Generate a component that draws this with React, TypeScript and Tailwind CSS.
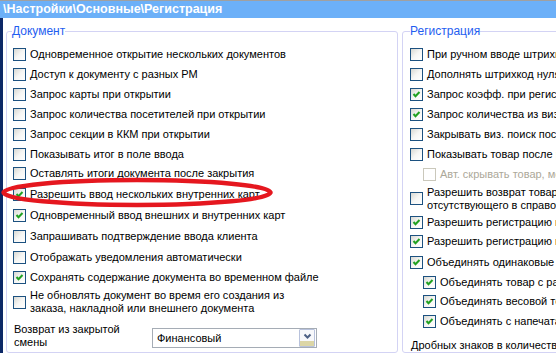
import React from 'react';
import clsx from 'clsx';

type Item = {
  text: string[];
  h: string;
  checked?: boolean;
  disabled?: boolean;
  indent?: boolean;
};

const docItems: Item[] = [
  { text: ['Одновременное открытие нескольких документов'], h: 'h-[20px]' },
  { text: ['Доступ к документу с разных РМ'], h: 'h-[20px]' },
  { text: ['Запрос карты при открытии'], h: 'h-[20px]' },
  { text: ['Запрос количества посетителей при открытии'], h: 'h-[20px]' },
  { text: ['Запрос секции в ККМ при открытии'], h: 'h-[20px]' },
  { text: ['Показывать итог в поле ввода'], h: 'h-[20px]' },
  { text: ['Оставлять итоги документа после закрытия'], h: 'h-[19px]' },
  { text: ['Разрешить ввод нескольких внутренних карт'], h: 'h-[22px]', checked: true },
  { text: ['Одновременный ввод внешних и внутренних карт'], h: 'h-[21px]', checked: true },
  { text: ['Запрашивать подтверждение ввода клиента'], h: 'h-[21px]' },
  { text: ['Отображать уведомления автоматически'], h: 'h-[20px]' },
  { text: ['Сохранять содержание документа во временном файле'], h: 'h-[20px]', checked: true },
  {
    text: ['Не обновлять документ во время его создания из', 'заказа, накладной или внешнего документа'],
    h: 'h-[30px]',
  },
];

const regItems: Item[] = [
  { text: ['При ручном вводе штрихкода искать товар'], h: 'h-[20px]' },
  { text: ['Дополнять штрихкод нулями'], h: 'h-[20px]' },
  { text: ['Запрос коэфф. при регистрации'], h: 'h-[20px]', checked: true },
  { text: ['Запрос количества из виз. поиска'], h: 'h-[20px]', checked: true },
  { text: ['Закрывать виз. поиск после выбора'], h: 'h-[20px]' },
  { text: ['Показывать товар после регистрации'], h: 'h-[20px]' },
  { text: ['Авт. скрывать товар, мс'], h: 'h-[20px]', disabled: true, indent: true },
  { text: ['Разрешить возврат товара,', 'отсутствующего в справочнике'], h: 'h-[29px]' },
  { text: ['Разрешить регистрацию по цене'], h: 'h-[18px]', checked: true },
  { text: ['Разрешить регистрацию по коду'], h: 'h-[21px]', checked: true },
  { text: ['Объединять одинаковые позиции'], h: 'h-[20px]', checked: true },
  { text: ['Объединять товар с разными ценами'], h: 'h-[20px]', checked: true, indent: true },
  { text: ['Объединять весовой товар'], h: 'h-[19px]', checked: true, indent: true },
  { text: ['Объединять с напечатанными'], h: 'h-[20px]', checked: true, indent: true },
];

function CheckBox({ checked, disabled }: { checked?: boolean; disabled?: boolean }) {
  return (
    <span
      className={clsx(
        'flex h-[13px] w-[13px] shrink-0 items-center justify-center border',
        disabled ? 'border-[#cac8bb] bg-white' : 'border-[#1c5180] bg-linear-to-br from-[#d8d8d2] via-[#f6f6f4] to-white'
      )}
    >
      {checked && (
        <svg width="11" height="11" viewBox="0 0 11 11">
          <polyline points="2.5,5 4.5,7.2 8.5,3" fill="none" stroke="#21a121" strokeWidth="2" />
        </svg>
      )}
    </span>
  );
}

function Row({ item }: { item: Item }) {
  return (
    <div className={clsx('flex items-center gap-[4px] whitespace-nowrap', item.h, item.indent && 'pl-[13px]')}>
      <CheckBox checked={item.checked} disabled={item.disabled} />
      <span className={clsx('leading-[13px]', item.disabled ? 'text-[#aca899]' : 'text-black')}>
        {item.text.map((line) => (
          <span key={line} className="block">{line}</span>
        ))}
      </span>
    </div>
  );
}

export default function App() {
  return (
    <div className="relative h-[353px] w-[556px] overflow-hidden bg-white font-['Liberation_Sans',Arial,sans-serif] text-[11px]">
      <div className="h-[18px] border-t border-[#a0a0a0] bg-[#6cb0f8] pl-[3px] text-[12.5px] font-bold leading-[17px] text-white whitespace-nowrap">
        \Настройки\Основные\Регистрация
      </div>

      <div className="flex h-[335px]">
        <div className="w-[3px] shrink-0 bg-[#0c2866]" />

        <fieldset className="mt-[6px] ml-[3px] w-[392px] shrink-0 rounded-[3px] border border-[#d3d3f4]">
          <legend className="ml-[5px] text-[12px] leading-[14px] text-[#1f5ef0]">Документ</legend>
          <div className="mt-[6px] pl-[6px]">
            {docItems.map((item) => (
              <Row key={item.text[0]} item={item} />
            ))}
            <div className="mt-[6px] flex items-start">
              <div className="ml-[1px] w-[138px] leading-[13px]">
                Возврат из закрытой
                <br />
                смены
              </div>
              <div className="mt-[5px] flex h-[20px] w-[165px] items-center border border-[#a5acb5] bg-white">
                <span className="flex-1 pl-[4px] leading-[13px]">Финансовый</span>
                <div className="mr-px flex h-[18px] w-[16px] flex-col items-center rounded-[1px] border border-[#b8c2dc] bg-[#f7f8fb]">
                  <svg width="9" height="7" viewBox="0 0 9 7" className="mt-[3px]">
                    <polyline points="1.5,1.5 4.5,4.5 7.5,1.5" fill="none" stroke="#4d6185" strokeWidth="2" />
                  </svg>
                  <div className="mt-auto h-[5px] w-full bg-[#dcd6a6]" />
                </div>
              </div>
            </div>
            <div className="mt-[7px] ml-[1px] leading-[13px]">Наценка по умолчанию</div>
          </div>
        </fieldset>

        <fieldset className="mt-[6px] ml-[4px] w-[220px] shrink-0 rounded-[3px] border border-[#d3d3f4]">
          <legend className="ml-[7px] text-[12px] leading-[14px] text-[#1f5ef0]">Регистрация</legend>
          <div className="mt-[6px] pl-[7px]">
            {regItems.map((item) => (
              <Row key={item.text[0] + item.h} item={item} />
            ))}
            <div className="flex h-[28px] items-center whitespace-nowrap pl-px">Дробных знаков в количестве</div>
          </div>
        </fieldset>
      </div>

      <svg className="pointer-events-none absolute top-0 left-0" width="556" height="353">
        <ellipse cx="137" cy="192.5" rx="133.5" ry="12.5" fill="none" stroke="#e5171f" strokeWidth="4.5" />
      </svg>
    </div>
  );
}
